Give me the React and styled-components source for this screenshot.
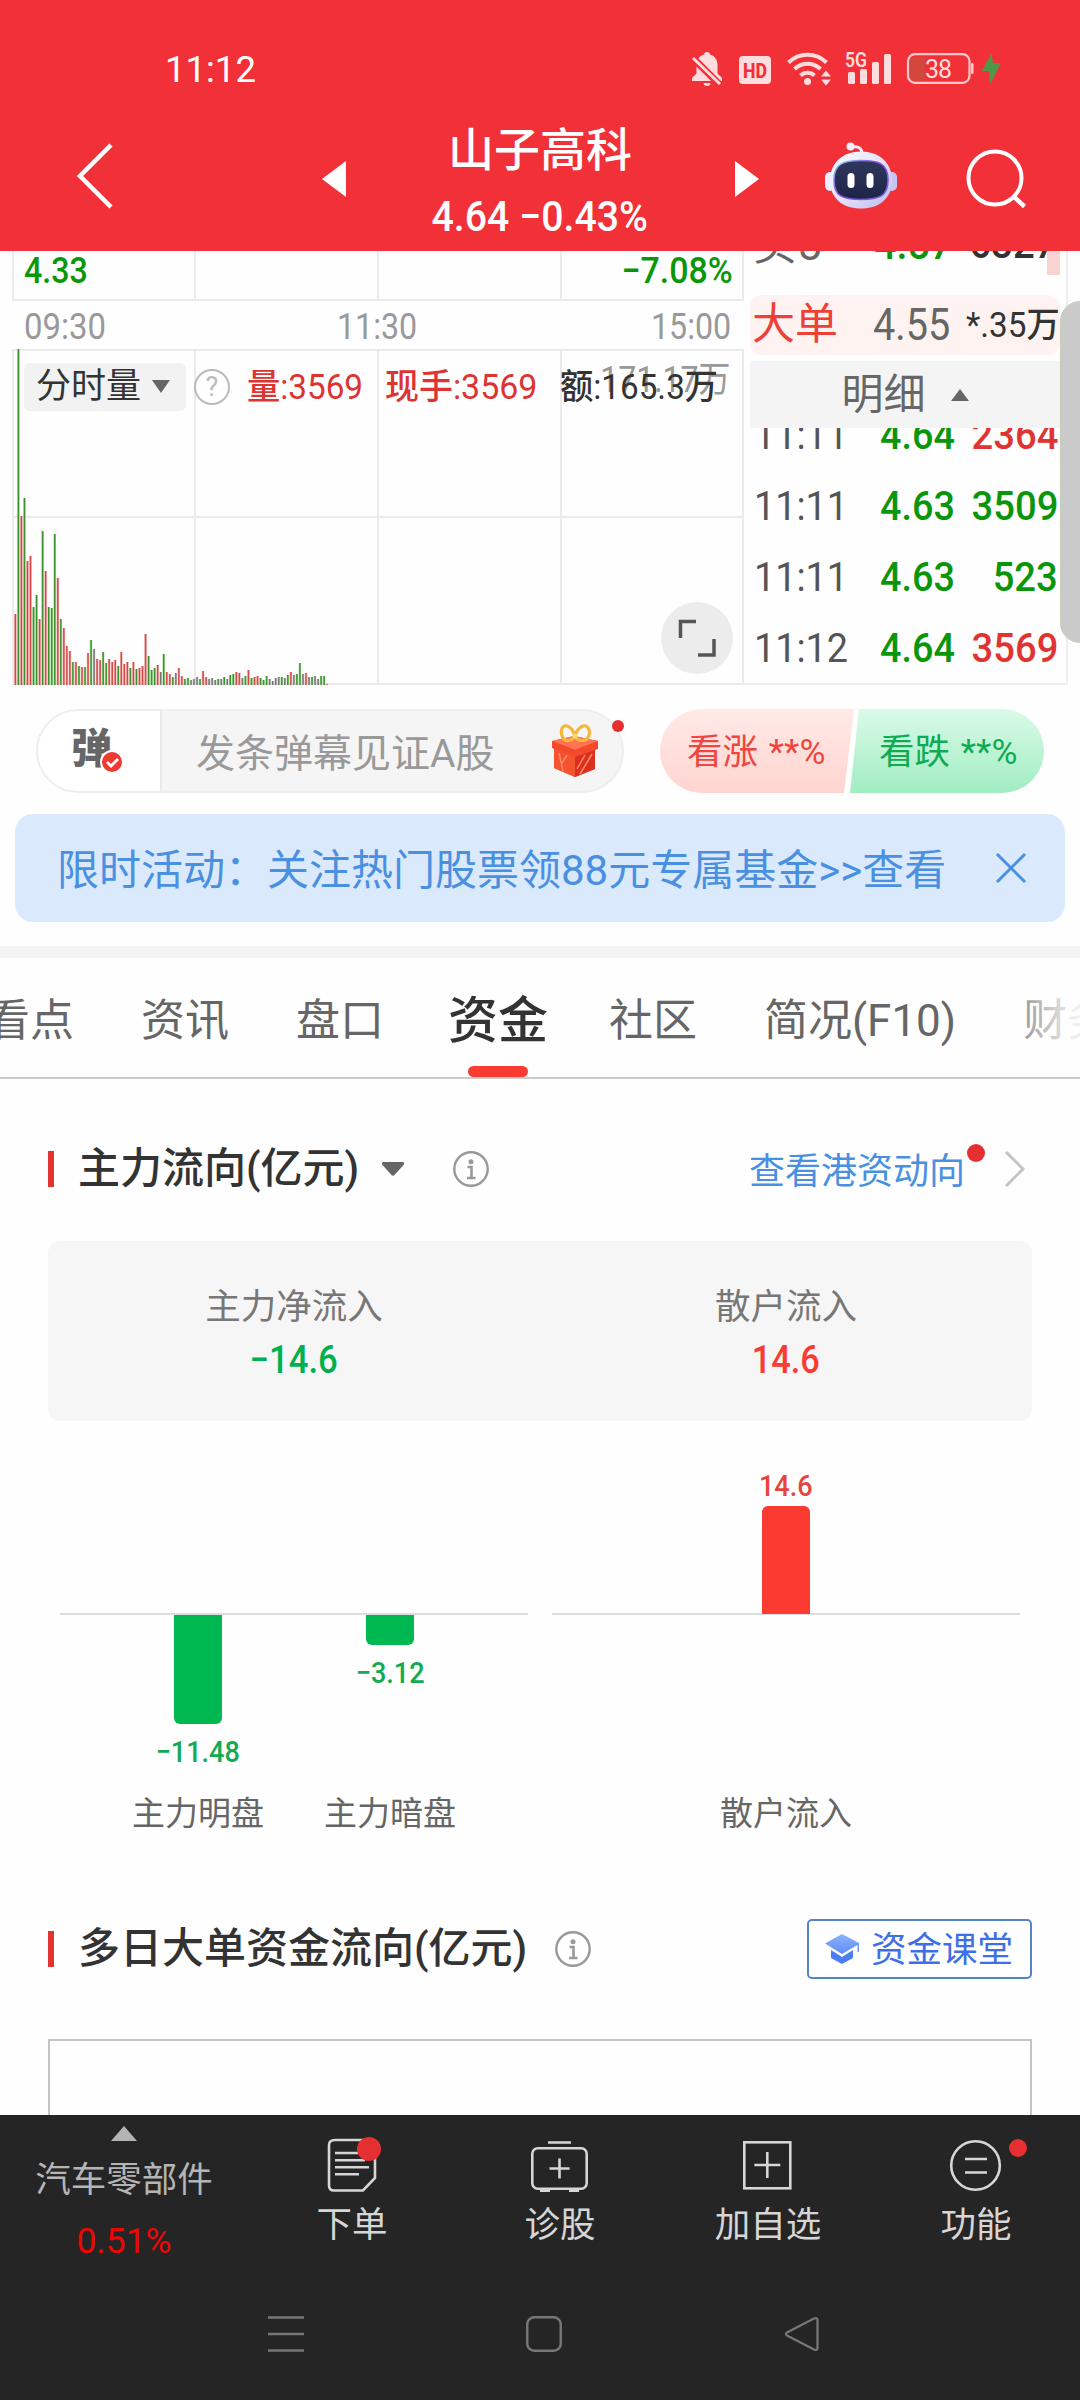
import React from 'react'
import styled, { createGlobalStyle } from 'styled-components'

const GREEN = '#0a960a'
const RED = '#e03432'

// [height in px, direction] for every minute since the open
const volumes = [
  [71, 'r'], [336, 'g'], [169, 'r'], [187, 'g'], [124, 'r'], [129, 'r'], [78, 'g'], [90, 'g'],
  [66, 'r'], [154, 'g'], [114, 'r'], [78, 'g'], [77, 'g'], [151, 'g'], [107, 'r'], [66, 'g'],
  [57, 'r'], [39, 'r'], [34, 'r'], [23, 'g'], [23, 'r'], [19, 'g'], [18, 'r'], [18, 'g'],
  [32, 'r'], [45, 'g'], [36, 'k'], [26, 'r'], [25, 'r'], [33, 'g'], [22, 'g'], [26, 'r'],
  [23, 'r'], [25, 'r'], [19, 'g'], [33, 'r'], [21, 'r'], [23, 'r'], [17, 'g'], [23, 'r'],
  [16, 'g'], [17, 'r'], [19, 'r'], [51, 'r'], [29, 'g'], [15, 'g'], [17, 'g'], [20, 'r'],
  [13, 'k'], [31, 'g'], [13, 'r'], [11, 'r'], [8, 'g'], [12, 'k'], [17, 'r'], [9, 'r'],
  [6, 'g'], [7, 'g'], [5, 'k'], [6, 'k'], [8, 'k'], [6, 'g'], [14, 'r'], [8, 'r'],
  [6, 'k'], [7, 'k'], [5, 'k'], [6, 'g'], [6, 'k'], [8, 'g'], [6, 'k'], [10, 'g'],
  [11, 'g'], [13, 'r'], [12, 'r'], [7, 'k'], [9, 'g'], [15, 'r'], [7, 'g'], [8, 'r'],
  [9, 'r'], [7, 'g'], [5, 'g'], [9, 'g'], [6, 'k'], [4, 'k'], [7, 'k'], [8, 'k'],
  [8, 'g'], [7, 'k'], [10, 'g'], [13, 'r'], [10, 'k'], [11, 'g'], [22, 'g'], [11, 'k'],
  [12, 'r'], [8, 'k'], [8, 'g'], [9, 'k'], [6, 'k'], [9, 'g'], [9, 'g'], [1, 'r'],
]

const barColors = { r: '#cf4a4a', g: '#3c9030', k: '#747474' }
const barGlow = { r: '#f3b4b0', g: '#a9dc9c', k: '#cccccc' }

const ticks = [
  { time: '11:11', price: '4.64', vol: '2364', color: RED },
  { time: '11:11', price: '4.63', vol: '3509', color: GREEN },
  { time: '11:11', price: '4.63', vol: '523', color: GREEN },
  { time: '11:12', price: '4.64', vol: '3569', color: RED },
]

const tabs = ['看点', '资讯', '盘口', '资金', '社区', '简况(F10)', '财务']

const StatusIcons = () => (
  <svg width='312' height='36' viewBox='690 51 312 36'>
    <g fill='#ffdcdd'>
      <path d='M707 52c1.8 0 3 1 3 2.6 5 1.400 7.500 5.500 7.500 10.400v8c0 2 4.500 3 4.500 6v2h-30v-2c0-3 4.500-4 4.500-6v-8c0-4.900 2.500-9 7.500-10.400 0-1.600 1.200-2.600 3-2.600z' />
      <path d='M703.500 83h7a3.500 3 0 0 1-7 0z' />
      <rect x='739' y='56' width='32' height='28' rx='4' />
    </g>
    <path d='M690 55l30 30' stroke='#f23037' strokeWidth='7' />
    <path d='M693 58l27 26' stroke='#ffdcdd' strokeWidth='3' />
    <text x='755' y='77.500' textAnchor='middle' textLength='24' lengthAdjust='spacingAndGlyphs' fontFamily='Roboto' fontWeight='800' fontSize='21' fill='#f23037'>HD</text>
    <g fill='none' stroke='#ffdcdd' strokeWidth='4'>
      <path d='M788.500 62.500a27 27 0 0 1 38 0' />
      <path d='M794.500 69a18.500 18.500 0 0 1 26 0' />
      <path d='M800.500 75.500a10 10 0 0 1 14 0' />
    </g>
    <circle cx='807.500' cy='81.500' r='3.500' fill='#ffdcdd' />
    <path d='M821 76.500l5-6 5 6zM821 79.500h10l-5 6z' fill='#ffdcdd' />
    <text x='845' y='67' textLength='22' lengthAdjust='spacingAndGlyphs' fontFamily='Roboto' fontWeight='600' fontSize='20' fill='#ffdcdd'>5G</text>
    <g fill='#ffdcdd'>
      <rect x='848' y='72' width='7' height='12' rx='1.500' />
      <rect x='860' y='69' width='7' height='15' rx='1.500' />
      <rect x='872' y='62' width='7' height='22' rx='1.500' />
      <rect x='884' y='54' width='7' height='30' rx='1.500' />
    </g>
    <path d='M918 57h-5a3 3 0 0 0-4 4v15q0 5 4 5h12V57z' fill='#d3463b' />
    <rect x='908' y='54.200' width='61.500' height='28.600' rx='7' fill='none' stroke='#ffc9ca' strokeWidth='2.200' />
    <rect x='971' y='63' width='2.500' height='11' rx='1.200' fill='#ffc9ca' />
    <text x='925' y='77.500' textLength='27' fontFamily='Roboto' fontSize='25' fill='#ffdcdd'>38</text>
    <path d='M991.500 53L982 71h7l1 13 11-21h-8z' fill='#4f984b' />
  </svg>
)

const Robot = () => (
  <svg width='74' height='68' viewBox='0 0 74 68'>
    <defs>
      <linearGradient id='shell' x1='0' y1='0' x2='1' y2='1'>
        <stop offset='0' stopColor='#ffffff' />
        <stop offset='.5' stopColor='#e4e2fa' />
        <stop offset='1' stopColor='#bdbcec' />
      </linearGradient>
      <linearGradient id='glow' x1='0' y1='0' x2='1' y2='1'>
        <stop offset='0' stopColor='#7fe0ee' />
        <stop offset='.4' stopColor='#8f4be0' />
        <stop offset='1' stopColor='#6a62e8' />
      </linearGradient>
      <linearGradient id='visor' x1='0' y1='0' x2='0' y2='1'>
        <stop offset='0' stopColor='#2f375c' />
        <stop offset='1' stopColor='#1c2548' />
      </linearGradient>
    </defs>
    <path d='M27 5.500c6-2 11 0 11 6' fill='none' stroke='#ecebfb' strokeWidth='3' />
    <circle cx='26.500' cy='4.500' r='4' fill='#f1f0fc' />
    <rect x='1' y='30' width='10' height='19' rx='5' fill='#eeedfc' />
    <rect x='62' y='30' width='11' height='19' rx='5' fill='#c6c4f0' />
    <path d='M37 9.500c18 0 31 11 31 29S55 66.500 37 66.500 6 56.500 6 38.500s13-29 31-29z' fill='url(#shell)' />
    <path d='M37 18.500c18 0 27 3 27 19.500S55 57.500 37 57.500 10 54.500 10 38s9-19.500 27-19.500z' fill='url(#visor)' stroke='url(#glow)' strokeWidth='1.600' />
    <rect x='23.500' y='31' width='7' height='15' rx='3.500' fill='#fff' />
    <rect x='42.500' y='31' width='7' height='15' rx='3.500' fill='#fff' />
  </svg>
)

const Gift = () => (
  <svg width='50' height='54' viewBox='0 0 50 54'>
    <path d='M2 17l22-5 24 5v7l-3 2v19L25 53 4 44V25l-2-2z' fill='#ef4a2e' />
    <path d='M2 17l22-5 24 5-23 9z' fill='#ff7350' />
    <path d='M4 25l21 7v21L4 44z' fill='#f4532f' />
    <path d='M25 32l20-7v20l-20 8z' fill='#dd2f20' />
    <path d='M2 17l23 9v7L2 24zM48 17l-23 9v7l23-8z' fill='#f5492e' />
    <path d='M9 29l4 18M17 31l-5 8M30 50l12-20M27 45l8-14' stroke='#ff8a63' strokeWidth='1.500' />
    <path d='M25 12C22 2 14-1 12 4.500S13 17 18 16.500 24 14 25 12zM25 12C28 2 36-1 38.500 4.500S38 17 32 16.500 26 14 25 12z' fill='none' stroke='#f5b63e' strokeWidth='3.200' />
    <circle cx='25' cy='12' r='2.600' fill='#ffd675' />
  </svg>
)

const InfoIcon = () => (
  <svg width='36' height='36' viewBox='0 0 36 36' fill='none' stroke='#999'>
    <circle cx='18' cy='18' r='16.700' strokeWidth='2.400' />
    <circle cx='18' cy='10.800' r='2.500' fill='#999' stroke='none' />
    <path d='M14.500 16H18.500v10.500M14 27h8.500' strokeWidth='2.600' />
  </svg>
)

const VolumeChart = () => (
  <ChartSvg width='732' height='337' viewBox='12 349 732 337'>
    <path d='M13 349v336M195 349v336M378 349v336M561 349v336M743 349v336M12 350h732M12 517h732M12 684h732' stroke='#ebebeb' strokeWidth='2' />
    {volumes.map(([h, c], i) => (
      <g key={i}>
        <rect x={14.1 + i * 3.027} y={685 - h} width='2.500' height={h} fill={barGlow[c]} />
        <rect x={14.7 + i * 3.027} y={685 - h} width='1.400' height={h} fill={barColors[c]} />
      </g>
    ))}
  </ChartSvg>
)

const FlowColumn = ({ label, value, height }) => {
  const up = value > 0
  const text = String(value).replace('-', '−')
  return (
    <Column>
      <Above>
        {up && <BarValue $up>{text}</BarValue>}
        {up && <Bar $up style={{ height }} />}
      </Above>
      <Below>
        {!up && <Bar style={{ height }} />}
        {!up && <BarValue>{text}</BarValue>}
      </Below>
      <Category>{label}</Category>
    </Column>
  )
}

const App = () => {
  return (
    <Page>
      <GlobalStyle />
      <Header>
        <StatusBar>
          <Clock>11:12</Clock>
          <StatusIcons />
        </StatusBar>
        <NavBar>
          <svg width='40' height='66' viewBox='0 0 40 66'>
            <path d='M36 2L5 33l31 31' fill='none' stroke='#fff' strokeWidth='4.500' />
          </svg>
          <svg width='24' height='36' viewBox='0 0 24 36'>
            <path d='M24 0v36L0 18z' fill='#fff' />
          </svg>
          <StockTitle>
            <h1>山子高科</h1>
            <Num $size={42} $weight={500} $scale={0.935} $origin='center'>4.64 −0.43%</Num>
          </StockTitle>
          <svg width='24' height='36' viewBox='0 0 24 36'>
            <path d='M0 0v36l24-18z' fill='#fff' />
          </svg>
          <Robot />
          <svg width='62' height='62' viewBox='0 0 62 62' fill='none' stroke='#fff'>
            <circle cx='30' cy='30' r='26.500' strokeWidth='4' />
            <path d='M47.500 47.500l12 11' strokeWidth='4.500' />
          </svg>
        </NavBar>
      </Header>

      <Quote>
        <ChartPanel>
          <PriceRow>
            <i />
            <i />
            <i />
            <PriceLabels>
              <Num $size={36.500} $weight={500} $color={GREEN} $scale={0.88}>4.33</Num>
              <Num $size={36.500} $weight={500} $color={GREEN} $scale={0.93} $origin='right'>−7.08%</Num>
            </PriceLabels>
          </PriceRow>
          <TimeAxis>
            <Num $size={37} $color='#999' $scale={0.89}>09:30</Num>
            <Num $size={37} $color='#999' $scale={0.87} $origin='center'>11:30</Num>
            <Num $size={37} $color='#999' $scale={0.87} $origin='right'>15:00</Num>
          </TimeAxis>
          <VolumePane>
            <VolumeChart />
            <YMax>171.17万</YMax>
            <VolumeInfo>
              <Picker>
                分时量
                <svg width='18' height='13' viewBox='0 0 18 13'>
                  <path d='M0 0h18L9 13z' fill='#666' />
                </svg>
              </Picker>
              <Help>?</Help>
              <InfoText $w={119} $scale={0.95}>量:3569</InfoText>
              <InfoText $w={156} $scale={0.97}>现手:3569</InfoText>
              <InfoText $dark $w={165} $scale={0.95}>额:165.3万</InfoText>
            </VolumeInfo>
            <Expand>
              <svg width='40' height='40' viewBox='0 0 40 40' fill='none' stroke='#555' strokeWidth='3.500'>
                <path d='M19 3.500H3.500V20M21 37h16V21' />
              </svg>
            </Expand>
          </VolumePane>
        </ChartPanel>

        <OrderPanel>
          <BuyRow>
            <Buy5>买5</Buy5>
            <Num $size={43} $weight={500} $color={GREEN} $scale={0.92}>4.57</Num>
            <Num $size={42} $weight={500} $color='#333' $scale={0.91} $origin='right'>6327</Num>
          </BuyRow>
          <BigOrder>
            <b>大单</b>
            <Num $size={44} $color='#666' $scale={0.9} $weight={450}>4.55</Num>
            <Num $size={35} $color='#333' $scale={0.95} $weight={450} $origin='right'>*.35万</Num>
          </BigOrder>
          <DetailHead>
            明细
            <svg width='18' height='12' viewBox='0 0 18 12'>
              <path d='M0 12h18L9 0z' fill='#666' />
            </svg>
          </DetailHead>
          <TickList>
            {ticks.map((t, i) => (
              <Tick key={i}>
                <Num $size={41.500} $color='#555' $scale={0.91}>{t.time}</Num>
                <Num $size={41.500} $weight={500} $color={GREEN} $scale={0.91}>{t.price}</Num>
                <Num $size={41.500} $weight={500} $color={t.color} $scale={0.92} $origin='right'>{t.vol}</Num>
              </Tick>
            ))}
          </TickList>
        </OrderPanel>
        <ScrollThumb />
      </Quote>

      <BarrageRow>
        <BarrageInput>
          <Toggle>
            <b>弹</b>
            <svg width='24' height='24' viewBox='0 0 24 24'>
              <circle cx='12' cy='12' r='11' fill='#ee3a30' stroke='#fff' strokeWidth='2' />
              <path d='M7 12l4 4 7-7' fill='none' stroke='#fff' strokeWidth='2.800' />
            </svg>
          </Toggle>
          <Placeholder>发条弹幕见证A股</Placeholder>
          <Gift />
          <Dot $size={12} $top={9} $right={-2} />
        </BarrageInput>
        <Votes>
          <Rise>看涨 **%</Rise>
          <Fall>看跌 **%</Fall>
        </Votes>
      </BarrageRow>

      <Banner>
        <span>限时活动：关注热门股票领88元专属基金&gt;&gt;查看</span>
        <svg width='32' height='32' viewBox='0 0 32 32'>
          <path d='M2 2l28 28M30 2L2 30' stroke='#4a90e2' strokeWidth='3' />
        </svg>
      </Banner>

      <Tabs>
        {tabs.map((t) => (
          <Tab key={t} $active={t === '资金'}>{t}</Tab>
        ))}
      </Tabs>

      <SectionHead>
        <h2>主力流向(亿元)</h2>
        <Caret width='24' height='14' viewBox='0 0 24 14'>
          <path d='M2 0h20q2 1 .5 3L13.500 13q-1.500 1.500-3 0L1.500 3Q0 1 2 0z' fill='#666' />
        </Caret>
        <InfoIcon />
        <HkLink>
          查看港资动向
          <Dot $size={18} $top={-3} $right={-20} />
        </HkLink>
        <svg width='22' height='36' viewBox='0 0 22 36'>
          <path d='M2 1l17 17L2 35' fill='none' stroke='#c4c4c4' strokeWidth='3' />
        </svg>
      </SectionHead>

      <Summary>
        <div>
          <p>主力净流入</p>
          <Num $size={39} $weight={500} $color='#00b050' $scale={0.89} $origin='center'>−14.6</Num>
        </div>
        <div>
          <p>散户流入</p>
          <Num $size={39} $weight={500} $color='#f93b34' $scale={0.88} $origin='center'>14.6</Num>
        </div>
      </Summary>

      <FlowChart>
        <Half>
          <FlowColumn label='主力明盘' value={-11.48} height={109} />
          <FlowColumn label='主力暗盘' value={-3.12} height={30} />
        </Half>
        <Half>
          <FlowColumn label='散户流入' value={14.6} height={108} />
        </Half>
      </FlowChart>

      <SectionHead $second>
        <h2>多日大单资金流向(亿元)</h2>
        <InfoIcon />
        <ClassButton>
          <svg width='34' height='30' viewBox='0 0 34 30'>
            <defs>
              <linearGradient id='cap' x1='0' y1='0' x2='0' y2='1'>
                <stop offset='0' stopColor='#8fb4fb' />
                <stop offset='1' stopColor='#5c8cf6' />
              </linearGradient>
            </defs>
            <path d='M17 0l17 9v9h-1.500v-7L17 20 0 9.500z' fill='url(#cap)' />
            <path d='M6 16l11 7 11-7v8l-11 6-11-6z' fill='#4b7df5' />
          </svg>
          <span>资金课堂</span>
        </ClassButton>
      </SectionHead>
      <TableFrame />

      <BottomBar>
        <Tools>
          <Sector>
            <svg width='26' height='15' viewBox='0 0 26 15'>
              <path d='M0 15h26L13 0z' fill='#b4b4b4' />
            </svg>
            <span>汽车零部件</span>
            <em>0.51%</em>
          </Sector>
          <Tool>
            <svg width='58' height='58' viewBox='-1 0 58 58' fill='none' stroke='#d6d6d6' strokeWidth='2.600'>
              <path d='M11 4h35q5 0 5 5v33L39 54.500H10q-5 0-5-5V9q0-5 6-5z' />
              <path d='M11 17h24M11 24.200h30M11 31.200h34M11 38.200h24' />
            </svg>
            <span>下单</span>
            <Dot $size={24} $top={22} $right={75} />
          </Tool>
          <Tool>
            <svg width='58' height='58' viewBox='1 0 58 58' fill='none' stroke='#d6d6d6' strokeWidth='2.600'>
              <path d='M18 6.500h23M29.500 22.500v20M19.500 32.500h20' />
              <rect x='2.300' y='12.300' width='54.400' height='40.500' rx='5.500' />
              <path d='M10 54.500h10M39 54.500h10' strokeWidth='3' />
            </svg>
            <span>诊股</span>
          </Tool>
          <Tool>
            <svg width='58' height='58' viewBox='0 0 58 58' fill='none' stroke='#d6d6d6' strokeWidth='2.600'>
              <rect x='5.300' y='6.300' width='46' height='46' />
              <path d='M28.300 16v26M15.300 29h26' />
            </svg>
            <span>加自选</span>
          </Tool>
          <Tool>
            <svg width='58' height='58' viewBox='0 0 58 58' fill='none' stroke='#d6d6d6' strokeWidth='2.600'>
              <circle cx='28.500' cy='29.500' r='24.300' />
              <path d='M18 23h22M18 36.500h22' />
            </svg>
            <span>功能</span>
            <Dot $size={18} $top={24} $right={53} />
          </Tool>
        </Tools>
        <SystemNav>
          <svg width='36' height='36' viewBox='0 0 36 36' fill='none' stroke='#777' strokeWidth='2.500'>
            <path d='M0 1.500h36M0 18h36M0 34.500h36' />
          </svg>
          <svg width='36' height='36' viewBox='0 0 36 36' fill='none' stroke='#777' strokeWidth='2.500'>
            <rect x='1.250' y='1.250' width='33.500' height='33.500' rx='7' />
          </svg>
          <svg width='36' height='36' viewBox='0 0 36 36' fill='none' stroke='#777' strokeWidth='2.300'>
            <path d='M30 2.500L3 16.500q-2 1.500 0 3L30 33.500q3.500 1.500 3.500-2v-27q0-3.500-3.500-2z' />
          </svg>
        </SystemNav>
      </BottomBar>
    </Page>
  )
}

const GlobalStyle = createGlobalStyle`
  * {
    box-sizing: border-box;
    margin: 0;
    padding: 0;
  }
  body {
    background: #fff;
    font-family: Roboto, 'Noto Sans CJK SC', sans-serif;
  }
  svg {
    display: block;
    flex-shrink: 0;
  }
`

const Page = styled.div`
  width: 1080px;
  height: 2400px;
  overflow: hidden;
  background: #fefefe;
`

const Num = styled.span`
  display: inline-block;
  font-size: ${(p) => p.$size}px;
  font-weight: ${(p) => p.$weight || 400};
  color: ${(p) => p.$color || 'inherit'};
  line-height: 1;
  white-space: nowrap;
  transform: scaleX(${(p) => p.$scale || 1});
  transform-origin: ${(p) => p.$origin || 'left'};
`

const Dot = styled.i`
  position: absolute;
  top: ${(p) => p.$top}px;
  right: ${(p) => p.$right}px;
  width: ${(p) => p.$size}px;
  height: ${(p) => p.$size}px;
  border-radius: 50%;
  background: #e62f30;
`

const Header = styled.header`
  height: 251px;
  background: #f23037;
  color: #fff;
`

const StatusBar = styled.div`
  height: 110px;
  padding: 51px 78px 0 165px;
  display: flex;
  align-items: flex-start;
  justify-content: space-between;
`

const Clock = styled.span`
  font-size: 36.500px;
  line-height: 37px;
`

const NavBar = styled.div`
  height: 141px;
  display: grid;
  grid-template-columns: 247px 60px 300px 165px 138px 62px;
  padding-left: 75px;
  align-items: center;

  > svg:nth-child(1) {
    margin-top: -9px;
  }
  > svg:nth-child(2) {
    margin-top: -3px;
  }
  > svg:nth-child(4) {
    margin-left: 53px;
    margin-top: -3px;
  }
  > svg:nth-child(5) {
    margin-left: -23px;
    margin-top: -9px;
  }
  > svg:last-child {
    margin-left: -20px;
    margin-top: -4px;
  }
`

const StockTitle = styled.div`
  display: flex;
  flex-direction: column;
  align-items: center;
  margin-left: 16px;
  width: 284px;
  height: 141px;

  h1 {
    height: 86px;
    line-height: 81px;
    font-size: 46px;
    font-weight: 500;
  }
`

const Quote = styled.section`
  position: relative;
  display: flex;
  height: 435px;
  padding-left: 12px;
`

const ChartPanel = styled.div`
  width: 732px;
`

const PriceRow = styled.div`
  position: relative;
  display: grid;
  grid-template-columns: 182px 183px 183px;
  height: 50px;
  border: 2px solid #ebebeb;
  border-top: 0;

  i {
    border-right: 2px solid #ebebeb;
  }
`

const PriceLabels = styled.div`
  position: absolute;
  inset: 2px 9px auto 10px;
  display: flex;
  justify-content: space-between;
`

const TimeAxis = styled.div`
  display: flex;
  justify-content: space-between;
  align-items: center;
  height: 48px;
  padding: 2px 13px 0 12px;
`

const VolumePane = styled.div`
  position: relative;
  height: 337px;
  padding-top: 12px;
`

const ChartSvg = styled.svg`
  position: absolute;
  inset: 0;
`

const YMax = styled.span`
  position: absolute;
  top: 13px;
  right: 13px;
  font-size: 36px;
  line-height: 36px;
  color: #999;
  transform: scaleX(0.89);
  transform-origin: right;
`

const VolumeInfo = styled.div`
  position: relative;
  display: flex;
  align-items: center;
  padding-left: 12px;

  > * {
    flex-shrink: 0;
  }
`

const Picker = styled.div`
  display: flex;
  align-items: center;
  gap: 11px;
  width: 162px;
  height: 48px;
  padding-left: 12px;
  border-radius: 6px;
  background: #f2f2f2;
  color: #333;
  font-size: 35px;
  line-height: 52px;
`

const Help = styled.span`
  width: 36px;
  height: 36px;
  margin: 0 17px 0 8px;
  border: 2px solid #bbb;
  border-radius: 50%;
  color: #bbb;
  font-size: 27px;
  line-height: 33px;
  text-align: center;
`

const InfoText = styled.span`
  width: ${(p) => p.$w}px;
  margin-right: 19px;
  white-space: nowrap;
  font-size: 35px;
  font-weight: 450;
  line-height: 48px;
  padding-top: 3px;
  color: ${(p) => (p.$dark ? '#333' : '#dc3433')};
  transform: scaleX(${(p) => p.$scale});
  transform-origin: left;
`

const Expand = styled.div`
  position: absolute;
  right: 11px;
  bottom: 12px;
  width: 72px;
  height: 72px;
  display: flex;
  align-items: center;
  justify-content: center;
  border-radius: 50%;
  background: #ececec;
`

const OrderPanel = styled.div`
  width: 324px;
  height: 434px;
  padding-left: 6px;
  padding-right: 6px;
  border-right: 2px solid #eee;
  border-bottom: 2px solid #eee;
`

const BuyRow = styled.div`
  display: grid;
  grid-template-columns: 121px 1fr auto;
  align-items: start;
  height: 24px;
  margin-bottom: 20px;
  overflow: hidden;
  padding-left: 3px;
  padding-right: 4px;
  background: linear-gradient(#f9d2d2, #f9d2d2) right / 13px 100% no-repeat;

  > span {
    margin-top: -28px;
  }
`

const Buy5 = styled.span`
  font-size: 44px;
  line-height: 44px;
  color: #666;
`

const BigOrder = styled.div`
  display: grid;
  grid-template-columns: 121px 1fr auto;
  align-items: center;
  height: 60px;
  padding-left: 2px;
  border-radius: 12px;
  background: #fff3f2;

  b {
    font-size: 43px;
    font-weight: 400;
    line-height: 58px;
    margin-top: -3px;
    color: #ee4036;
  }
`

const DetailHead = styled.div`
  display: flex;
  align-items: center;
  justify-content: center;
  gap: 25px;
  height: 67px;
  margin-top: 6px;
  line-height: 66px;
  background: #f4f4f4;
  font-size: 42px;
  color: #666;
`

const TickList = styled.div`
  display: flex;
  flex-direction: column;
  justify-content: flex-end;
  height: 255px;
  overflow: hidden;
`

const Tick = styled.div`
  display: grid;
  grid-template-columns: 126px 1fr auto;
  align-items: center;
  flex-shrink: 0;
  height: 71px;
  padding: 0 2px 0 4px;
`

const ScrollThumb = styled.div`
  position: absolute;
  top: 50px;
  right: -2px;
  width: 22px;
  height: 342px;
  border: 1px solid #c3cdb8;
  border-radius: 20px 0 0 20px;
  background: #cacaca;
`

const BarrageRow = styled.section`
  display: flex;
  justify-content: space-between;
  padding: 23px 36px 0;
`

const BarrageInput = styled.div`
  position: relative;
  display: flex;
  align-items: center;
  width: 588px;
  height: 84px;
  border: 2px solid #eee;
  border-radius: 42px;
  background: linear-gradient(90deg, #fff 122px, #eaeaea 122px, #eaeaea 124px, #f5f5f5 124px);
`

const Toggle = styled.div`
  display: flex;
  align-items: center;
  width: 124px;
  padding-left: 33px;

  b {
    margin-top: -4px;
    font-size: 41px;
    font-weight: 900;
    line-height: 60px;
    color: #666;
  }
  svg {
    margin: 22px 0 0 -12px;
  }
`

const Placeholder = styled.span`
  width: 388px;
  margin-top: -3px;
  padding-left: 34px;
  font-size: 39px;
  color: #999;
`

const Votes = styled.div`
  display: flex;
  width: 384px;
  height: 84px;
  overflow: hidden;
  border-radius: 42px;
`

const Vote = styled.div`
  width: 194px;
  font-size: 35.500px;
  line-height: 86px;
  word-spacing: 2px;
  white-space: nowrap;
`

const Rise = styled(Vote)`
  padding-left: 27px;
  color: #ee4640;
  background: linear-gradient(#ffeae8, #ffd5d0);
  clip-path: polygon(0 0, 100% 0, 184px 100%, 0 100%);
`

const Fall = styled(Vote)`
  margin-left: -4px;
  padding-left: 29px;
  color: #0fab52;
  background: linear-gradient(#dafae8, #a1edc2);
  clip-path: polygon(9px 0, 100% 0, 100% 100%, 0 100%);
`

const Banner = styled.div`
  display: flex;
  align-items: center;
  justify-content: space-between;
  height: 108px;
  margin: 21px 15px 24px;
  padding: 0 38px 0 42px;
  border-radius: 18px;
  background: #dae9fc;
  color: #4a90e2;
  font-size: 42px;

  span {
    margin-top: -4px;
  }
`

const Tabs = styled.nav`
  position: relative;
  display: flex;
  gap: 67px;
  height: 133px;
  overflow: hidden;
  border-top: 12px solid #f4f4f4;
  border-bottom: 2px solid #cacaca;

  &::after {
    content: '';
    position: absolute;
    top: 0;
    right: 0;
    width: 70px;
    height: 118px;
    background: linear-gradient(90deg, rgba(254, 254, 254, 0.2), rgba(254, 254, 254, 0.9) 90%);
  }
`

const Tab = styled.span`
  display: flex;
  flex-direction: column;
  align-items: center;
  flex-shrink: 0;
  line-height: 126px;
  font-size: ${(p) => (p.$active ? 50 : 44)}px;
  font-weight: ${(p) => (p.$active ? 500 : 400)};
  color: ${(p) => (p.$active ? '#333' : '#666')};
  ${(p) => p.$active && 'margin: 0 -6px 0 -3px;'}

  &:first-child {
    margin-left: -14px;
  }
  &::after {
    content: ${(p) => (p.$active ? "''" : 'none')};
    width: 60px;
    height: 12px;
    margin-top: -18px;
    border-radius: 6px;
    background: #fb3a31;
  }
`

const SectionHead = styled.div`
  display: flex;
  align-items: center;
  height: ${(p) => (p.$second ? 187 : 162)}px;
  padding: ${(p) => (p.$second ? '7px 48px 0 48px' : '18px 54px 0 48px')};

  h2 {
    padding-left: 30px;
    font-size: 42px;
    font-weight: 500;
    line-height: 50px;
    color: #333;
    margin-right: ${(p) => (p.$second ? 28 : 22)}px;
    background: linear-gradient(#e23330, #e23330) left center / 6px 36px no-repeat;
  }
`

const Caret = styled.svg`
  margin-right: 48px;
`

const HkLink = styled.span`
  position: relative;
  margin: 5px 39px 0 auto;
  font-size: 36px;
  line-height: 50px;
  color: #4a90e2;
`

const Summary = styled.div`
  display: grid;
  grid-template-columns: 1fr 1fr;
  height: 180px;
  margin: 0 48px;
  padding-top: 40px;
  border-radius: 12px;
  background: #f6f6f6;
  text-align: center;

  p {
    height: 60px;
    font-size: 35.500px;
    line-height: 52px;
    color: #777;
  }
`

const FlowChart = styled.section`
  display: grid;
  grid-template-columns: 468px 468px;
  gap: 24px;
  height: 431px;
  padding: 0 60px;
`

const Half = styled.div`
  display: flex;
  justify-content: center;
  background: linear-gradient(#dcdcdc, #dcdcdc) 0 192px / 100% 2px no-repeat;
`

const Column = styled.div`
  width: 192px;
`

const Above = styled.div`
  display: flex;
  flex-direction: column;
  align-items: center;
  justify-content: flex-end;
  height: 193px;
  margin-bottom: 1px;
`

const Below = styled.div`
  display: flex;
  flex-direction: column;
  align-items: center;
  height: 172px;
`

const Bar = styled.div`
  width: 48px;
  border-radius: ${(p) => (p.$up ? '6px 6px 0 0' : '0 0 6px 6px')};
  background: ${(p) => (p.$up ? '#fb3b32' : '#00b850')};
`

const BarValue = styled.span`
  margin: ${(p) => (p.$up ? '0 0 4px' : '12px 0 0')};
  font-size: 30px;
  font-weight: 500;
  line-height: 32px;
  color: ${(p) => (p.$up ? '#e8443c' : '#12aa52')};
  transform: scaleX(0.9);
`

const Category = styled.p`
  text-align: center;
  font-size: 33px;
  line-height: 54px;
  color: #666;
`

const ClassButton = styled.button`
  display: flex;
  align-items: center;
  gap: 12px;
  width: 225px;
  height: 60px;
  margin-left: auto;
  padding-left: 16px;
  border: 2px solid #5583c9;
  border-radius: 5px;
  background: #fff;
  color: #3e6fe8;
  font-family: inherit;
  font-size: 35.500px;
  white-space: nowrap;

  span {
    margin-top: -5px;
  }
`

const TableFrame = styled.div`
  height: 76px;
  margin: 0 48px;
  border: 2px solid #c4c4c4;
  border-bottom: 0;
`

const BottomBar = styled.footer`
  height: 285px;
  background: #252525;
`

const Tools = styled.div`
  display: grid;
  grid-template-columns: 248px repeat(4, 208px);
  height: 171px;
`

const Sector = styled.div`
  display: flex;
  flex-direction: column;
  align-items: center;
  padding-top: 11px;

  span {
    margin-top: 13px;
    font-size: 35.500px;
    line-height: 52px;
    color: #b5b5b5;
  }
  em {
    font-style: normal;
    font-size: 35.500px;
    line-height: 70px;
    color: #f00505;
  }
`

const Tool = styled.div`
  position: relative;
  display: flex;
  flex-direction: column;
  align-items: center;
  padding-top: 21px;

  span {
    font-size: 35.500px;
    line-height: 62px;
    color: #d6d6d6;
  }
`

const SystemNav = styled.div`
  display: grid;
  grid-template-columns: repeat(3, 258px);
  justify-items: center;
  align-items: center;
  height: 96px;
  padding-left: 157px;
`

export default App
